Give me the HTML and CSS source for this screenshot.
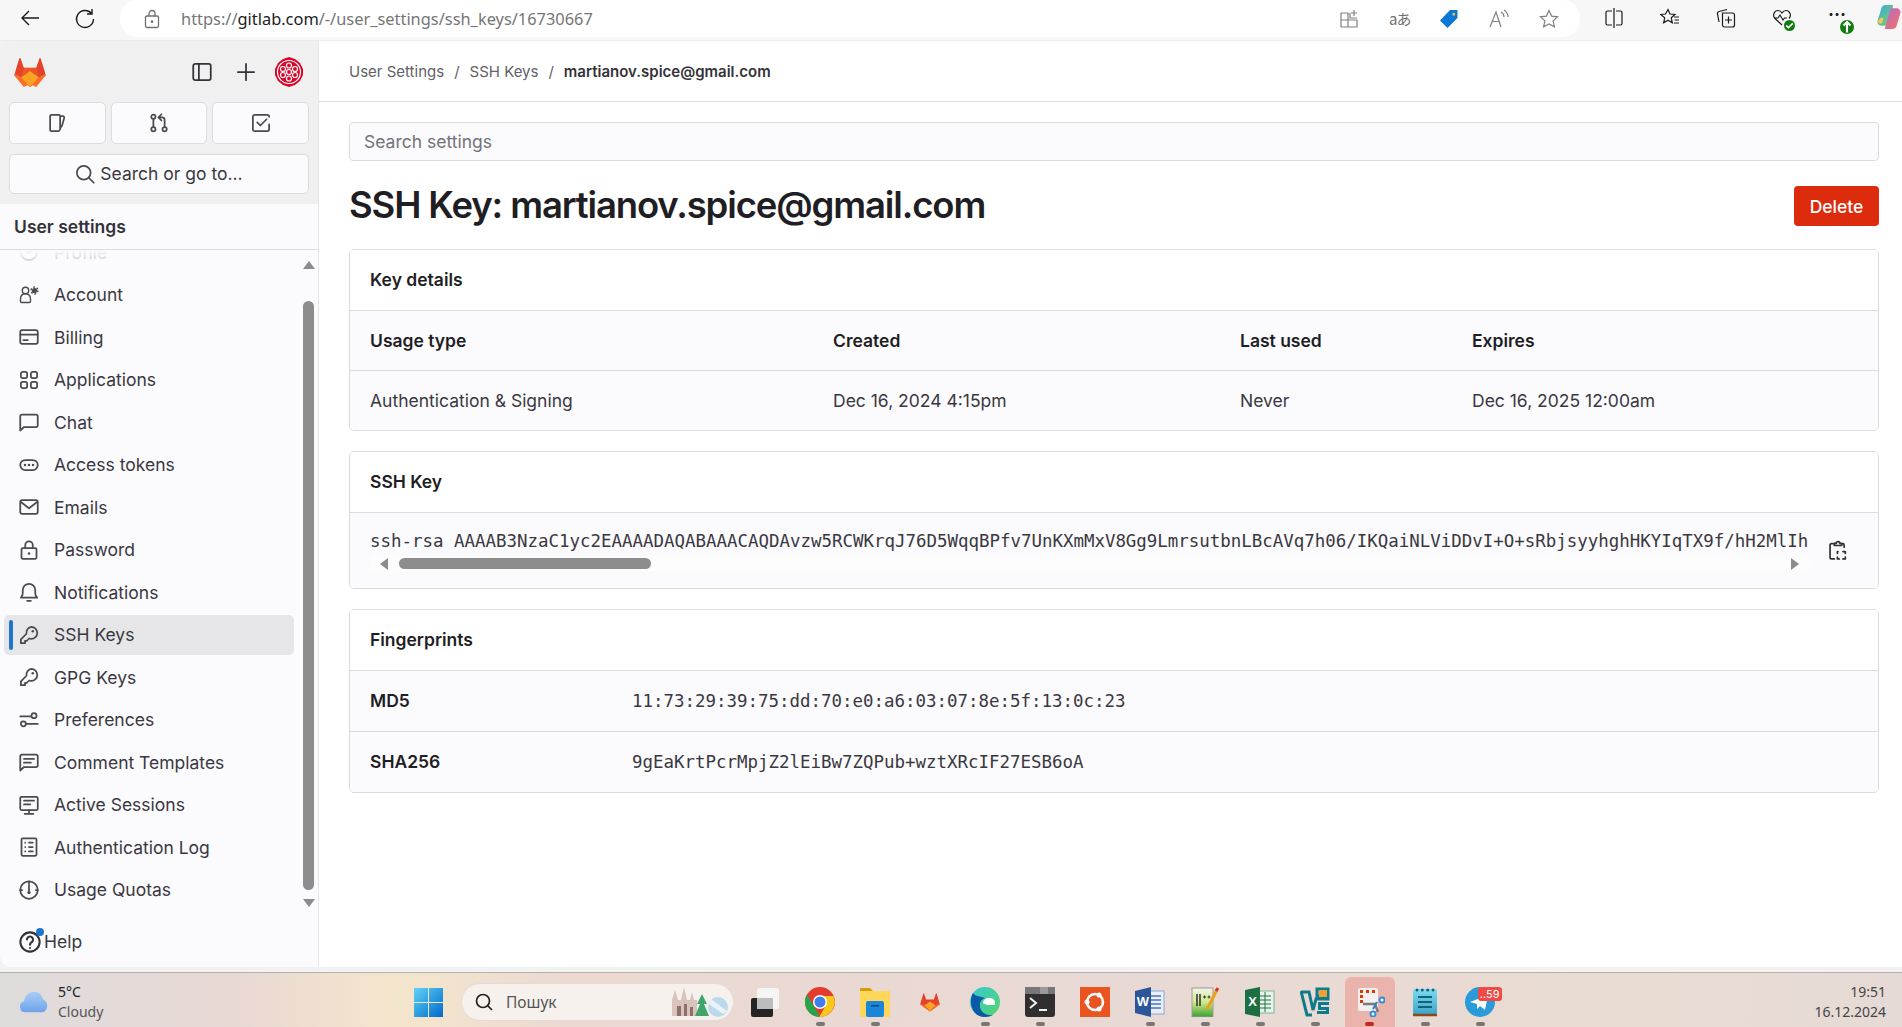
FILE: index.html
```html
<!DOCTYPE html>
<html>
<head>
    <title>SSH Key</title>
    <link rel="stylesheet" href="styles.css">
</head>
<body>

<header class="browser-bar">
    <svg class="browser-icon back-btn" viewBox="0 0 24 24"><path d="M21 12H4M11 5l-7 7 7 7"/></svg>
    <svg class="browser-icon reload-btn" viewBox="0 0 24 24"><path d="M18.5 7.5A8.5 8.5 0 1 0 20.5 13M19 3v5h-5"/></svg>
    <div class="url-pill">
        <svg class="lock-icon" viewBox="0 0 16 20"><rect x="1.5" y="7" width="13" height="11.5" rx="1.5"/><path d="M5 7V4.5a3 3 0 0 1 6 0V7"/><circle cx="8" cy="12.7" r=".7"/></svg>
        <span class="url-text">https://<b>gitlab.com</b>/-/user_settings/ssh_keys/16730667</span>
        <div class="pill-icons">
            <svg class="pill-icon" viewBox="0 0 20 20"><path d="M2 4h7v14H2zM2 11h16v7H9M11 4v5h7M15 1v6M12 4h6"/></svg>
            <span class="translate-glyph">aあ</span>
            <svg class="pill-icon" viewBox="0 0 20 20"><path class="tag-blue" d="M11 1h7.500v8L8.500 19 1 11.500z"/><rect class="tag-dot" x="13.500" y="4" width="2.500" height="2.500"/></svg>
            <svg class="pill-icon" viewBox="0 0 20 20"><path d="M1 18L7 3l5 15M3.500 12.500h7M12 3c2 1 3 3 3 5M15 1c2.500 1.500 4 4 4 7"/></svg>
            <svg class="pill-icon" viewBox="0 0 20 20"><path d="M10 1.500l2.600 5.600 6 .7-4.500 4.100 1.300 6L10 15l-5.400 2.900 1.300-6L1.400 7.800l6-.7z"/></svg>
        </div>
    </div>
    <div class="browser-tools">
        <svg class="tool-icon" viewBox="0 0 20 20"><path d="M10 0v20M8 3H3.500A1.500 1.500 0 0 0 2 4.500v11A1.500 1.500 0 0 0 3.500 17H8M12 3h4.500A1.500 1.500 0 0 1 18 4.500v11a1.500 1.500 0 0 1-1.500 1.500H12"/></svg>
        <svg class="tool-icon" viewBox="0 0 20 20"><path d="M8 1.500l2 4.500 5 .5-3.700 3.300 1 5-4.300-2.600-4.300 2.600 1-5L.5 6.500l5-.5zM14 9h5M14.500 12h4.500M14 15h5"/></svg>
        <div class="tool-stack">
            <svg class="tool-icon" viewBox="0 0 20 20"><path d="M3 14L1.500 6a2 2 0 0 1 1.500-2.500L11 1.500M6.500 5h10a2 2 0 0 1 2 2v10a2 2 0 0 1-2 2h-8a2 2 0 0 1-2-2zM12.500 8.500v7M9 12h7"/></svg>
        </div>
        <div class="tool-stack">
            <svg class="tool-icon" viewBox="0 0 20 20"><path d="M10 17L3 10.500C0 7 2.500 2.500 6 2.500c2 0 3 1 4 2.500 1-1.500 2-2.500 4-2.500 3.500 0 6 4.500 3 8M2.500 10H6l2-3 3 5 1.500-2H15"/></svg>
            <span class="tool-badge"><svg viewBox="0 0 10 10"><path d="M2 5l2 2 4-4"/></svg></span>
        </div>
        <div class="tool-stack">
            <span class="more-dots">...</span>
            <span class="tool-badge update"><svg viewBox="0 0 10 10"><path d="M5 9V1.500M2.500 4L5 1.500 7.500 4"/></svg></span>
        </div>
        <svg class="copilot" viewBox="0 0 24 24">
            <defs>
                <linearGradient id="copA" x1="0" y1="0" x2="1" y2="1"><stop offset="0" stop-color="#2ea8e8"/><stop offset="1" stop-color="#8bd05a"/></linearGradient>
                <linearGradient id="copB" x1="0" y1="0" x2="1" y2="1"><stop offset="0" stop-color="#b26ad8"/><stop offset="1" stop-color="#f5735a"/></linearGradient>
            </defs>
            <path fill="url(#copA)" d="M9 1h7l-5 17c-.5 1.500-1.500 2-3 2H5c-2.500 0-4-2-3.500-4.500L5 4c.5-2 2-3 4-3z"/>
            <path fill="url(#copB)" d="M15 4h4c2.500 0 4 2 3.500 4.500L19 20c-.5 2-2 3-4 3H8l5-17c.4-1.300 1-2 2-2z"/>
            <path fill="#f7c948" d="M4 13l3-.5L5.500 18H4c-1.500 0-2.500-1-2-2.500z"/>
        </svg>
    </div>
</header>

<div class="app">
    <aside class="sidebar">
        <div class="sidebar-top">
            <div class="top-row">
                <svg class="gl-logo" viewBox="0 0 32 30">
                    <path fill="#e24329" d="M31.500 17.600L29.900 11.800 26.600 1.300c-.2-.5-.9-.5-1.100 0l-3.300 9.500H9.800L6.500 1.300c-.2-.5-.9-.5-1.100 0L2.100 11.800.500 17.600c-.2.600 0 1.300.6 1.700L16 30l14.900-10.700c.6-.4.800-1.100.6-1.700z"/>
                    <path fill="#fc6d26" d="M31.500 17.600l-.1-.4c-2.400.5-4.700 1.500-6.700 3L16 26.900 22.200 30 30.900 19.300c.6-.4.800-1.100.6-1.700z"/>
                    <path fill="#fc6d26" d="M.500 17.600l.1-.4c2.400.5 4.700 1.500 6.700 3l8.700 6.700L9.800 30 1.100 19.300C.500 18.900.300 18.200.500 17.600z"/>
                    <path fill="#fca326" d="M7.300 20.200L16 30l8.700-9.800L16 14z"/>
                    <path fill="#fc6d26" d="M9.800 10.800L7.300 20.200 16 14l8.700 6.200-2.500-9.400z" opacity=".45"/>
                </svg>
                <div class="top-actions">
                    <svg class="gl-icon dark" viewBox="0 0 16 16"><rect x="1" y="1.500" width="14" height="13" rx="1.500"/><path d="M5.500 1.500v13"/></svg>
                    <svg class="gl-icon dark" viewBox="0 0 16 16"><path d="M8 1.500v13M1.500 8h13"/></svg>
                    <svg class="avatar" viewBox="0 0 30 30">
                        <path fill="#d7082c" d="M15 0l6 2 5 4 3 6v6l-3 6-5 4-6 2-6-2-5-4-3-6v-6l3-6 5-4z"/>
                        <g fill="none" stroke="#fff" stroke-width="1.200">
                            <circle cx="15" cy="15" r="2.500"/>
                            <circle cx="15" cy="8.500" r="2.500"/><circle cx="15" cy="21.500" r="2.500"/>
                            <circle cx="9" cy="12" r="2.500"/><circle cx="21" cy="12" r="2.500"/>
                            <circle cx="9" cy="18" r="2.500"/><circle cx="21" cy="18" r="2.500"/>
                            <circle cx="15" cy="15" r="11.500"/>
                        </g>
                    </svg>
                </div>
            </div>
            <div class="top-buttons">
                <div class="square-btn"><svg class="gl-icon" viewBox="0 0 16 16"><path d="M10.500 10.500V2.500a1 1 0 0 0-1-1h-6a1 1 0 0 0-1 1v11a1 1 0 0 0 1 1h5.500c.8 0 1.200-.6 1.500-1.500zM10.500 2.500h2c1 0 1.500.8 1.200 1.700l-1.700 6-1.500 2"/></svg></div>
                <div class="square-btn"><svg class="gl-icon" viewBox="0 0 16 16"><circle cx="3.500" cy="3" r="1.700"/><circle cx="3.500" cy="13" r="1.700"/><circle cx="12.500" cy="13" r="1.700"/><path d="M3.500 4.700v6.600M12.500 11.300V5.500a2 2 0 0 0-2-2H8M10 1L7.500 3.500 10 6"/></svg></div>
                <div class="square-btn"><svg class="gl-icon" viewBox="0 0 16 16"><path d="M14.500 9v4a1.500 1.500 0 0 1-1.500 1.500H3A1.500 1.500 0 0 1 1.500 13V3A1.500 1.500 0 0 1 3 1.500h10A1.500 1.500 0 0 1 14.500 3M5 7.500l2.500 2.500 5-5"/></svg></div>
            </div>
            <div class="nav-search">
                <svg class="gl-icon" viewBox="0 0 16 16"><circle cx="7" cy="7" r="5.500"/><path d="M11 11l4 4"/></svg>
                <span>Search or go to...</span>
            </div>
        </div>

        <div class="sidebar-title">User settings</div>

        <div class="nav-wrap">
            <nav class="nav-list">
                <a class="nav-item faded"><svg class="gl-icon" viewBox="0 0 16 16"><circle cx="8" cy="8" r="6.500"/><circle cx="8" cy="6" r="2.500"/></svg>Profile</a>
                <a class="nav-item"><svg class="gl-icon" viewBox="0 0 20 20"><circle cx="6.500" cy="5.500" r="3.200"/><path d="M6.500 8.700c-3.500 0-5 2.500-5 5.300v2.500a1 1 0 0 0 1 1h8a1 1 0 0 0 1-1V14c0-2.800-1.500-5.300-5-5.300z"/><circle class="solid" cx="15.500" cy="5.500" r="2.600"/><circle class="gear" cx="15.500" cy="5.500" r="3.400"/></svg>Account</a>
                <a class="nav-item"><svg class="gl-icon" viewBox="0 0 16 16"><rect x="1" y="2.500" width="14" height="11" rx="1.500"/><path d="M1 6h14M3.500 10.500h3.500"/></svg>Billing</a>
                <a class="nav-item"><svg class="gl-icon" viewBox="0 0 16 16"><rect x="1.500" y="1.500" width="5" height="5" rx="1.500"/><rect x="9.500" y="1.500" width="5" height="5" rx="1.500"/><rect x="1.500" y="9.500" width="5" height="5" rx="1.500"/><rect x="9.500" y="9.500" width="5" height="5" rx="1.500"/></svg>Applications</a>
                <a class="nav-item"><svg class="gl-icon" viewBox="0 0 16 16"><path d="M1 14.800V3.500A1.500 1.500 0 0 1 2.500 2h11A1.500 1.500 0 0 1 15 3.500v7a1.500 1.500 0 0 1-1.500 1.500H4z"/></svg>Chat</a>
                <a class="nav-item"><svg class="gl-icon" viewBox="0 0 16 16"><rect x="1" y="4" width="14" height="8" rx="4"/><path class="dots" d="M4.800 8h.01M8 8h.01M11.200 8h.01"/></svg>Access tokens</a>
                <a class="nav-item"><svg class="gl-icon" viewBox="0 0 16 16"><rect x="1" y="2.500" width="14" height="11" rx="1.500"/><path d="M1.500 4L8 9l6.500-5"/></svg>Emails</a>
                <a class="nav-item"><svg class="gl-icon" viewBox="0 0 16 16"><rect x="2" y="6.500" width="12" height="8.500" rx="1"/><path d="M5 6.500V4a3 3 0 0 1 6 0v2.500"/><path class="dots" d="M8 10.700h.01"/></svg>Password</a>
                <a class="nav-item"><svg class="gl-icon" viewBox="0 0 16 16"><path d="M1.500 12.500h13c-1-1-1.500-2-1.500-3.500V6.500a5 5 0 0 0-10 0V9c0 1.500-.5 2.500-1.500 3.500zM6.500 15h3"/></svg>Notifications</a>
                <a class="nav-item active"><svg class="gl-icon" viewBox="0 0 16 16"><path d="M9.800 1.500a4.800 4.800 0 0 1 0 9.600c-.6 0-1.200-.1-1.700-.3L6.300 12.600H4.800v1.900H1.500v-3l4.500-4.500a4.800 4.800 0 0 1 3.800-5.500z"/><path class="dots" d="M11 5h.01"/></svg>SSH Keys</a>
                <a class="nav-item"><svg class="gl-icon" viewBox="0 0 16 16"><path d="M9.800 1.500a4.800 4.800 0 0 1 0 9.600c-.6 0-1.200-.1-1.700-.3L6.300 12.600H4.800v1.900H1.500v-3l4.500-4.500a4.800 4.800 0 0 1 3.800-5.500z"/><path class="dots" d="M11 5h.01"/></svg>GPG Keys</a>
                <a class="nav-item"><svg class="gl-icon" viewBox="0 0 16 16"><circle cx="12" cy="4.500" r="2"/><circle cx="3.500" cy="11" r="2"/><path d="M1 5h8.500M5.500 11H15"/></svg>Preferences</a>
                <a class="nav-item"><svg class="gl-icon" viewBox="0 0 16 16"><path d="M1 14.800V3.500A1.500 1.500 0 0 1 2.500 2h11A1.500 1.500 0 0 1 15 3.500v7a1.500 1.500 0 0 1-1.500 1.500H4zM4 5.500h8M4 8.500h5.500"/></svg>Comment Templates</a>
                <a class="nav-item"><svg class="gl-icon" viewBox="0 0 16 16"><rect x="1" y="1.500" width="14" height="10.500" rx="1"/><path d="M4 4.500h8M4 7.500h5M8 12v3M4.500 15h7"/></svg>Active Sessions</a>
                <a class="nav-item"><svg class="gl-icon" viewBox="0 0 16 16"><rect x="2" y="1" width="12" height="14" rx="1"/><path d="M5 4.500h.01M5 8h.01M5 11.500h.01M8 4.500h3M8 8h3M8 11.500h3"/></svg>Authentication Log</a>
                <a class="nav-item"><svg class="gl-icon" viewBox="0 0 16 16"><circle cx="8" cy="8" r="7"/><path d="M8 1v2M2.500 8H1M15 8h-1.500M8 4v5"/><circle class="solid" cx="8" cy="10" r="1.300"/></svg>Usage Quotas</a>
            </nav>
            <div class="nav-fade"></div>
            <div class="side-scroll">
                <span class="arrow up"></span>
                <span class="side-track"><span class="side-thumb"></span></span>
                <span class="arrow down"></span>
            </div>
        </div>

        <div class="help-row">
            <span class="help-icon">
                <svg class="gl-icon" viewBox="0 0 16 16"><circle cx="8" cy="8" r="7"/><path d="M5.800 6.200a2.200 2.200 0 1 1 3.400 1.900c-.8.500-1.200 1-1.200 1.900M8 12.300h.01"/></svg>
                <span class="help-dot"></span>
            </span>
            <span>Help</span>
        </div>
    </aside>

    <main class="content">
        <div class="breadcrumbs">
            <span>User Settings</span><span class="crumb-sep">/</span><span>SSH Keys</span><span class="crumb-sep">/</span><span class="crumb-current">martianov.spice@gmail.com</span>
        </div>
        <div class="page">
            <div class="settings-search">Search settings</div>

            <div class="title-row">
                <h1>SSH Key: martianov.spice@gmail.com</h1>
                <button class="delete-btn">Delete</button>
            </div>

            <section class="card">
                <div class="card-head">Key details</div>
                <div class="row details-grid bold"><span>Usage type</span><span>Created</span><span>Last used</span><span>Expires</span></div>
                <div class="row details-grid"><span>Authentication &amp; Signing</span><span>Dec 16, 2024 4:15pm</span><span>Never</span><span>Dec 16, 2025 12:00am</span></div>
            </section>

            <section class="card">
                <div class="card-head">SSH Key</div>
                <div class="key-body">
                    <div class="key-scroll">
                        <div class="key-text">ssh-rsa AAAAB3NzaC1yc2EAAAADAQABAAACAQDAvzw5RCWKrqJ76D5WqqBPfv7UnKXmMxV8Gg9LmrsutbnLBcAVq7h06/IKQaiNLViDDvI+O+sRbjsyyhghHKYIqTX9f/hH2MlIh</div>
                        <div class="key-bar">
                            <span class="arrow left"></span>
                            <span class="key-track"><span class="key-thumb"></span></span>
                            <span class="arrow right"></span>
                        </div>
                    </div>
                    <svg class="gl-icon copy-icon" viewBox="0 0 16 18"><path d="M4 3H2.500A1 1 0 0 0 1.500 4v10.500a1 1 0 0 0 1 1H5M11 3h1a1 1 0 0 1 1 1v2M5 4.500V2.800h1.500a1.500 1.500 0 0 1 3 0H11v1.700zM8 9.500h-.5V11M12 9.500h2v1.500M7.500 14v1.500H9M14 14v1.500h-2"/></svg>
                </div>
            </section>

            <section class="card">
                <div class="card-head">Fingerprints</div>
                <div class="row print-grid"><b>MD5</b><code>11:73:29:39:75:dd:70:e0:a6:03:07:8e:5f:13:0c:23</code></div>
                <div class="row print-grid"><b>SHA256</b><code>9gEaKrtPcrMpjZ2lEiBw7ZQPub+wztXRcIF27ESB6oA</code></div>
            </section>
        </div>
    </main>
</div>

<footer class="taskbar">
    <div class="weather">
        <svg class="cloud" viewBox="0 0 32 24">
            <defs><linearGradient id="cloudG" x1="0" y1="0" x2="0" y2="1"><stop offset="0" stop-color="#a8cdf6"/><stop offset="1" stop-color="#6ea3ea"/></linearGradient></defs>
            <path fill="url(#cloudG)" d="M7 23a6 6 0 0 1-1.500-11.800C6 6 10 1 16 1c5 0 8.500 3.500 9.500 8A7.500 7.500 0 0 1 25 23z"/>
        </svg>
        <div class="weather-text"><span class="temp">5°C</span><span>Cloudy</span></div>
    </div>
    <svg class="win-logo" viewBox="0 0 29 29">
        <defs><linearGradient id="winG" x1="0" y1="0" x2="1" y2="1"><stop offset="0" stop-color="#5fd3f8"/><stop offset="1" stop-color="#0069c8"/></linearGradient></defs>
        <path fill="url(#winG)" d="M0 0h14v14H0zM15 0h14v14H15zM0 15h14v14H0zM15 15h14v14H15z"/>
    </svg>
    <div class="task-search">
        <svg class="q-icon" viewBox="0 0 20 20"><circle cx="9" cy="9" r="6.500"/><path d="M13.500 13.500L18 18"/></svg>
        <span>Пошук</span>
        <svg class="castle" viewBox="0 0 60 32">
            <path fill="#d8c4bc" d="M2 30V14l3-10 3 10h3l3-13 3 13h3l2-8 2 8h3v16z"/>
            <path fill="#8f6f6a" d="M7 30V20h4v10zM14 30V18h3v12zM20 30V21h3v9z"/>
            <path fill="#3fa56b" d="M32 8l5 10h-3l5 12H25l5-12h-3z"/>
            <circle cx="48" cy="21" r="10" fill="#bcd8ec"/>
            <path fill="#e9f3f9" d="M41 13l16 12-4 3-14-10z"/>
        </svg>
    </div>
    <div class="task-apps">
        <div class="app-slot"><svg class="app-icon stack-app" viewBox="0 0 30 30"><rect x="7" y="1" width="22" height="21" rx="2" fill="#f5f5f5"/><rect x="1" y="11" width="22" height="19" rx="2" fill="#242424"/><rect x="7" y="11" width="16" height="11" fill="#bdbdbd"/></svg></div>
        <div class="app-slot on"><svg class="app-icon" viewBox="0 0 30 30"><circle cx="15" cy="15" r="15" fill="#e33b2e"/><path fill="#f9c81a" d="M15 9h13.500A15 15 0 0 1 14 30l6-10z"/><path fill="#2aa44b" d="M2 7.500L9.500 20 15 30A15 15 0 0 1 2 7.500z"/><circle cx="15" cy="15" r="7" fill="#fff"/><circle cx="15" cy="15" r="5.500" fill="#3f7fea"/></svg></div>
        <div class="app-slot on"><svg class="app-icon" viewBox="0 0 30 30"><path fill="#d99b0a" d="M0 2a1 1 0 0 1 1-1h9l3 3h-13z"/><path fill="#fcd75a" d="M0 4h30v26H0z"/><rect x="6" y="14" width="18" height="16" rx="2" fill="#1b86d8"/><rect x="11" y="18" width="8" height="1.500" fill="#0b4c86"/></svg></div>
        <div class="app-slot"><svg class="app-icon small-gl" viewBox="0 0 32 30"><path fill="#e24329" d="M31.500 17.600L26.600 1.300c-.2-.5-.9-.5-1.100 0l-3.300 9.500H9.800L6.500 1.300c-.2-.5-.9-.5-1.100 0L.5 17.600c-.2.600 0 1.300.6 1.700L16 30l14.900-10.700c.6-.4.800-1.100.6-1.700z"/><path fill="#fca326" d="M7.300 20.200L16 30l8.700-9.800L16 14z"/><path fill="#fc6d26" d="M.5 17.600L7.300 20.200 16 30 1.100 19.300zM31.500 17.600L24.700 20.200 16 30l14.900-10.700z"/></svg></div>
        <div class="app-slot on"><svg class="app-icon" viewBox="0 0 30 30"><defs><linearGradient id="edgeG" x1="0" y1="0" x2="1" y2="1"><stop offset="0" stop-color="#38c8d8"/><stop offset="1" stop-color="#52d66a"/></linearGradient></defs><circle cx="15" cy="15" r="15" fill="url(#edgeG)"/><path fill="#0b5aa8" d="M3 6C-2 15 2 30 15 30c3 0 6-1 8-2-8 1-14-4-13-11 .4-3 2-5 5-6-5-2-9-1-12-5z"/><path fill="#fff" d="M13 16c0-3 3-5 6-5 4 0 6 2 6 5 0 1 0 2-1 2h-6c-3-1-4-1-5-2z"/></svg></div>
        <div class="app-slot on"><svg class="app-icon" viewBox="0 0 30 30"><rect y="0" width="30" height="30" rx="3" fill="#2f2f2f"/><rect x="0" y="0" width="30" height="7" fill="#777"/><rect x="15" y="0" width="8" height="7" fill="#9a9a9a"/><path d="M5 11l6 5-6 5" fill="none" stroke="#f2f2f2" stroke-width="2"/><path d="M14 23h8" stroke="#f2f2f2" stroke-width="2"/></svg></div>
        <div class="app-slot"><svg class="app-icon" viewBox="0 0 30 30"><rect width="30" height="30" fill="#e95420"/><circle cx="15" cy="15" r="8" fill="none" stroke="#fff" stroke-width="2.500"/><circle cx="7" cy="15" r="2.500" fill="#fff"/><circle cx="19" cy="8" r="2.500" fill="#fff"/><circle cx="19" cy="22" r="2.500" fill="#fff"/></svg></div>
        <div class="app-slot on"><svg class="app-icon" viewBox="0 0 30 30"><rect x="12" y="4" width="17" height="23" fill="#e9f0fa" stroke="#8aa6d6"/><path d="M16 9h10M16 13h10M16 17h10M16 21h10" stroke="#4a74bd" stroke-width="1.500"/><path fill="#2b579a" d="M0 4l16-4v30L0 26z"/><text class="word-w" x="8" y="19">W</text></svg></div>
        <div class="app-slot on"><svg class="app-icon" viewBox="0 0 30 30"><defs><linearGradient id="nppG" x1="0" y1="0" x2="0" y2="1"><stop offset="0" stop-color="#f4f4e8"/><stop offset=".5" stop-color="#cde88a"/><stop offset="1" stop-color="#3da02c"/></linearGradient></defs><rect x="2" y="1" width="21" height="29" fill="url(#nppG)" stroke="#9a9a9a"/><path d="M7 7v12M10 7v12" stroke="#333" stroke-width="1.500"/><path d="M13 10h3M14.500 8.500v3M17.500 10h3M19 8.500v3" stroke="#333"/><path d="M17 22L27 3" stroke="#e8a21a" stroke-width="3"/><path d="M26 4l2-3" stroke="#d9342a" stroke-width="3"/></svg></div>
        <div class="app-slot on"><svg class="app-icon" viewBox="0 0 30 30"><rect x="12" y="4" width="17" height="22" fill="#e8f3ec" stroke="#7fb796"/><path d="M15 9h11M15 13h11M15 17h11M15 21h11M20 5v20" stroke="#217346"/><path fill="#1d6f42" d="M0 3l15-3v30L0 27z"/><text class="excel-x" x="7.500" y="19">X</text></svg></div>
        <div class="app-slot on"><svg class="app-icon" viewBox="0 0 30 30"><path d="M1 5h8l4 18 3-11h12v-3H17V2h11v8" fill="none" stroke="#0f7a8c" stroke-width="3"/><path d="M19 3h8v7h-8z" fill="#f0a030"/><path d="M18 15h11v3H21v2h8v7H17v-3h9v-1h-8z" fill="#0f7a8c"/><path d="M1 4l6 24h5" fill="none" stroke="#0f7a8c" stroke-width="3"/></svg></div>
        <div class="app-slot active"><svg class="app-icon" viewBox="0 0 30 30"><rect x="3" y="1" width="20" height="23" rx="2" fill="#f2f0ee"/><path d="M5 3h3v3H5zM11 3h3v3h-3zM5 8h3v3H5zM5 13h3v3H5zM17 3h3v3h-3z" fill="#d83b01"/><path d="M8 17h12l3 8" fill="none" stroke="#7a7a7a" stroke-width="2.500"/><path d="M22 15l-4 7" stroke="#2f7fc0" stroke-width="2"/><circle cx="27" cy="13" r="2.500" fill="#fff" stroke="#2f8fd8" stroke-width="2"/><circle cx="18" cy="27" r="2.500" fill="#fff" stroke="#2f8fd8" stroke-width="2"/></svg></div>
        <div class="app-slot on"><svg class="app-icon" viewBox="0 0 30 30"><defs><linearGradient id="noteG" x1="0" y1="0" x2="0" y2="1"><stop offset="0" stop-color="#7fdaf0"/><stop offset="1" stop-color="#3aa5c8"/></linearGradient></defs><rect x="3" y="2" width="24" height="26" rx="2" fill="url(#noteG)"/><path d="M3 28h24" stroke="#8a4a1a" stroke-width="2.500"/><path d="M8 10h14M8 15h14M8 20h14" stroke="#14617e" stroke-width="2"/><path class="dots-note" d="M7 3h.01M12.300 3h.01M17.700 3h.01M23 3h.01"/></svg></div>
        <div class="app-slot on">
            <svg class="app-icon" viewBox="0 0 30 30"><circle cx="15" cy="15" r="15" fill="#2a9ad8"/><path fill="#fff" d="M5 15l18-7-3 15-5-4-3 3v-5z"/></svg>
            <span class="tg-badge">..59</span>
        </div>
    </div>
    <div class="clock"><span>19:51</span><span>16.12.2024</span></div>
</footer>

</body>
</html>
```

FILE: styles.css
```css
* {
    box-sizing: border-box;
}
html, body {
    height: 100%;
}
body {
    margin: 0;
    display: flex;
    flex-direction: column;
    height: 1027px;
    overflow: hidden;
    background: #f2f2f2;
    font-family: Inter, "Noto Sans", sans-serif;
    font-size: 17.5px;
    color: #3a383f;
}

/* browser toolbar */
.browser-bar {
    height: 41px;
    flex: none;
    display: flex;
    align-items: flex-start;
    background: #f7f7f7;
    border-bottom: 1px solid #ececec;
    padding-left: 18px;
}
.browser-icon {
    width: 24px;
    height: 24px;
    margin-top: 6px;
    fill: none;
    stroke: #1d1d1d;
    stroke-width: 1.4;
}
.reload-btn {
    margin-left: 31px;
}
.url-pill {
    width: 1460px;
    height: 37px;
    margin-left: 23px;
    background: #fff;
    border-radius: 0 18px 18px 18px;
    border-top-left-radius: 18px;
    display: flex;
    align-items: center;
    padding-left: 24px;
}
.lock-icon {
    width: 16px;
    height: 20px;
    fill: none;
    stroke: #6f6f6f;
    stroke-width: 1.3;
}
.url-text {
    margin-left: 21px;
    font-family: "Noto Sans", sans-serif;
    font-size: 16.4px;
    color: #767676;
}
.url-text b {
    font-weight: 400;
    color: #1c1c1c;
}
.pill-icons {
    margin-left: auto;
    display: flex;
    align-items: center;
    gap: 30px;
    padding-right: 21px;
}
.pill-icon {
    width: 20px;
    height: 20px;
    fill: none;
    stroke: #808080;
    stroke-width: 1.2;
}
.pill-icon .tag-blue {
    fill: #0a78d6;
    stroke: none;
}
.pill-icon .tag-dot {
    fill: #f8c12d;
    stroke: none;
}
.translate-glyph {
    width: 20px;
    font-family: "Noto Sans CJK JP", sans-serif;
    font-size: 15px;
    color: #707070;
    white-space: nowrap;
    letter-spacing: -1px;
}
.browser-tools {
    display: flex;
    align-items: center;
    gap: 36px;
    height: 36px;
    padding-left: 24px;
}
.tool-icon {
    width: 20px;
    height: 20px;
    fill: none;
    stroke: #1a1a1a;
    stroke-width: 1.2;
    display: block;
}
.tool-stack {
    position: relative;
    width: 20px;
    height: 20px;
}
.tool-badge {
    position: absolute;
    right: -3px;
    bottom: -3px;
    width: 11px;
    height: 11px;
    border-radius: 50%;
    background: #107c10;
}
.tool-badge svg {
    display: block;
    fill: none;
    stroke: #fff;
    stroke-width: 1.5;
}
.tool-badge.update {
    width: 14px;
    height: 14px;
    right: -6px;
    bottom: -6px;
}
.more-dots {
    position: absolute;
    left: 0;
    top: -9px;
    font-size: 18px;
    font-weight: 700;
    color: #1a1a1a;
}
.copilot {
    width: 26px;
    height: 26px;
    margin-left: -8px;
    margin-top: -2px;
}

/* app shell */
.app {
    flex: 1;
    display: flex;
    min-height: 0;
    margin-bottom: 5px;
}
.sidebar {
    width: 319px;
    flex: none;
    display: flex;
    flex-direction: column;
    background: #fbfafd;
    border-right: 1px solid #e6e6e8;
    border-radius: 12px 0 0 12px;
    overflow: hidden;
}
.sidebar-top {
    height: 163px;
    flex: none;
    background: #f0f0f0;
    padding: 16px 9px 0;
}
.top-row {
    display: flex;
    align-items: center;
    justify-content: space-between;
    height: 30px;
    padding: 0 5px;
}
.gl-logo {
    width: 32px;
    height: 30px;
}
.top-actions {
    display: flex;
    align-items: center;
    gap: 24px;
}
.top-actions .avatar {
    width: 30px;
    height: 30px;
    margin-left: -6px;
}
.gl-icon {
    width: 20px;
    height: 20px;
    flex: none;
    fill: none;
    stroke: #4b4a50;
    stroke-width: 1.4;
    stroke-linecap: round;
    stroke-linejoin: round;
}
.gl-icon.dark {
    stroke: #333238;
}
.gl-icon .solid {
    fill: #4b4a50;
    stroke: none;
}
.gl-icon .gear {
    stroke-width: 1.5;
    stroke-dasharray: 1.8 1.76;
    stroke-linecap: butt;
}
.gl-icon .dots {
    stroke-width: 2;
}
.top-buttons {
    display: flex;
    gap: 5px;
    margin-top: 15px;
}
.square-btn {
    flex: 1;
    height: 42px;
    background: #fbfafd;
    border: 1px solid #dcdcde;
    border-radius: 5px;
    display: flex;
    align-items: center;
    justify-content: center;
}
.nav-search {
    height: 40px;
    margin-top: 10px;
    padding-bottom: 1px;
    background: #fbfafd;
    border: 1px solid #dcdcde;
    border-radius: 5px;
    display: flex;
    align-items: center;
    justify-content: center;
    gap: 5px;
}
.sidebar-title {
    height: 46px;
    flex: none;
    display: flex;
    align-items: center;
    padding-left: 14px;
    font-weight: 600;
    color: #333238;
    border-bottom: 1px solid #dcdcde;
}
.nav-wrap {
    position: relative;
    height: 673px;
    flex: none;
    overflow: hidden;
}
.nav-list {
    margin-top: -18px;
    padding: 0 24px 0 4px;
    display: flex;
    flex-direction: column;
    gap: 2.5px;
}
.nav-item {
    position: relative;
    height: 40px;
    flex: none;
    display: flex;
    align-items: center;
    gap: 15px;
    padding-left: 15px;
    border-radius: 5px;
}
.nav-item.faded {
    opacity: .3;
}
.nav-item.active {
    background: #e6e6e8;
}
.nav-item.active::before {
    content: "";
    position: absolute;
    left: 5px;
    top: 5px;
    bottom: 5px;
    width: 4px;
    border-radius: 2px;
    background: #1f75cb;
}
.nav-fade {
    position: absolute;
    top: 0;
    left: 0;
    right: 0;
    height: 14px;
    background: linear-gradient(#fbfafd, rgba(251, 250, 253, 0));
}
.side-scroll {
    position: absolute;
    right: 4px;
    top: 11px;
    width: 11px;
    display: flex;
    flex-direction: column;
    align-items: center;
}
.side-track {
    height: 589px;
    margin: 32px 0 9px;
}
.side-thumb {
    display: block;
    width: 11px;
    height: 589px;
    border-radius: 6px;
    background: #8c8c8c;
}
.arrow {
    display: block;
    width: 0;
    height: 0;
    flex: none;
    border-style: solid;
    border-color: transparent;
}
.arrow.up {
    border-width: 0 6px 8px;
    border-bottom-color: #8c8c8c;
}
.arrow.down {
    border-width: 8px 6px 0;
    border-top-color: #8c8c8c;
}
.arrow.left {
    border-width: 6px 8px 6px 0;
    border-right-color: #8c8c8c;
}
.arrow.right {
    border-width: 6px 0 6px 8px;
    border-left-color: #8c8c8c;
}
.help-row {
    display: flex;
    align-items: center;
    gap: 3px;
    padding: 0 0 3px 19px;
    height: 40px;
}
.help-icon {
    position: relative;
    display: flex;
}
.help-icon .gl-icon {
    stroke: #333238;
    stroke-width: 1.5;
    width: 22px;
    height: 22px;
}
.help-dot {
    position: absolute;
    right: -3px;
    top: -3px;
    width: 8px;
    height: 8px;
    border-radius: 50%;
    background: #1f75cb;
}

/* main content */
.content {
    flex: 1;
    min-width: 0;
    background: #fff;
}
.breadcrumbs {
    height: 61px;
    display: flex;
    align-items: center;
    padding: 1px 0 0 30px;
    border-bottom: 1px solid #dcdcde;
    font-size: 15px;
    color: #626168;
}
.crumb-sep {
    margin: 0 10px;
}
.crumb-current {
    font-weight: 600;
    color: #333238;
}
.page {
    padding: 20px 23px 0 30px;
}
.settings-search {
    height: 39px;
    display: flex;
    align-items: center;
    padding-left: 14px;
    background: #fbfafd;
    border: 1px solid #dcdcde;
    border-radius: 4px;
    color: #737278;
}
.title-row {
    display: flex;
    align-items: center;
    justify-content: space-between;
    height: 88px;
}
h1 {
    margin: 0;
    font-size: 36.5px;
    font-weight: 600;
    letter-spacing: -1.13px;
    color: #1f1e24;
}
.delete-btn {
    width: 85px;
    height: 40px;
    margin-top: 2px;
    border: 0;
    border-radius: 4px;
    background: #dd2b0e;
    color: #fff;
    font: 500 17.5px Inter, sans-serif;
}
.card {
    border: 1px solid #dcdcde;
    border-radius: 5px;
    margin-bottom: 20px;
    overflow: hidden;
}
.card-head {
    height: 60px;
    display: flex;
    align-items: center;
    padding: 0 0 1px 20px;
    background: #fff;
    font-weight: 600;
    color: #1f1e24;
}
.row {
    height: 60px;
    display: grid;
    align-items: center;
    padding-left: 20px;
    background: #fbfafd;
    border-top: 1px solid #dcdcde;
}
.details-grid {
    grid-template-columns: 463px 407px 232px 1fr;
}
.details-grid.bold {
    padding-bottom: 1px;
    font-weight: 600;
    color: #1f1e24;
}
.print-grid {
    height: 61px;
    grid-template-columns: 262px 1fr;
}
.print-grid b {
    padding-bottom: 2px;
    font-weight: 600;
    color: #1f1e24;
}
code, .key-text {
    font-family: "DejaVu Sans Mono", "Liberation Mono", monospace;
    font-size: 17.44px;
    color: #3a383f;
}
.key-body {
    height: 76px;
    display: flex;
    padding: 0 0 0 20px;
    background: #fbfafd;
    border-top: 1px solid #dcdcde;
}
.key-scroll {
    width: 1439px;
    flex: none;
    padding-top: 17px;
}
.key-text {
    white-space: nowrap;
    overflow: hidden;
    line-height: 22px;
}
.key-bar {
    height: 15px;
    margin-top: 4px;
    display: flex;
    align-items: center;
    background: #fdfdfe;
    padding: 0 10px;
}
.key-track {
    flex: 1;
    padding-left: 11px;
}
.key-thumb {
    display: block;
    width: 252px;
    height: 11px;
    border-radius: 6px;
    background: #8c8c8c;
}
.copy-icon {
    margin: 27px 0 0 19px;
    width: 20px;
    height: 22px;
    stroke: #333238;
}

/* windows taskbar */
.taskbar {
    height: 55px;
    flex: none;
    display: flex;
    align-items: center;
    padding-top: 4px;
    border-top: 1px solid #b8b2ae;
    background: linear-gradient(90deg, #dedcdc 0, #e8d8d4 12%, #f4e6cc 21%, #ebd9d2 30%, #e9d9d4 60%, #e9dcd2 85%, #e6dad6 100%);
    color: #444;
}
.weather {
    width: 414px;
    flex: none;
    display: flex;
    align-items: center;
    padding-left: 19px;
    font-family: "Noto Sans", sans-serif;
    font-size: 14px;
}
.cloud {
    width: 30px;
    height: 24px;
}
.weather-text {
    display: flex;
    flex-direction: column;
    margin-left: 9px;
    line-height: 20px;
    color: #555;
}
.temp {
    color: #222;
}
.win-logo {
    width: 29px;
    height: 29px;
    flex: none;
}
.task-search {
    width: 273px;
    height: 38px;
    flex: none;
    margin-left: 18px;
    display: flex;
    align-items: center;
    padding-left: 12px;
    background: #f7f1ee;
    border: 1px solid #e4dcd8;
    border-radius: 19px;
    font-family: "Noto Sans", sans-serif;
    font-size: 15.5px;
    color: #555;
}
.q-icon {
    width: 20px;
    height: 20px;
    margin-right: 12px;
    fill: none;
    stroke: #222;
    stroke-width: 1.7;
}
.castle {
    width: 60px;
    height: 32px;
    margin-left: auto;
    margin-right: 3px;
}
.task-apps {
    display: flex;
    height: 54px;
    margin-top: -4px;
    margin-left: 3.500px;
}
.app-slot {
    position: relative;
    width: 55px;
    display: flex;
    align-items: center;
    justify-content: center;
    padding-top: 4px;
}
.app-slot.on::after, .app-slot.active::after {
    content: "";
    position: absolute;
    left: 23px;
    bottom: 1px;
    width: 9px;
    height: 4px;
    border-radius: 2px;
    background: #777;
}
.app-slot.active {
    width: 50px;
    margin: 4px 2.500px 0;
    padding-top: 0;
    border-radius: 6px 6px 0 0;
    background: #eab3ac;
}
.app-slot.active::after {
    left: 20px;
    background: #c42b1c;
}
.app-icon {
    width: 30px;
    height: 30px;
}
.small-gl {
    width: 20px;
    height: 20px;
}
.word-w, .excel-x {
    fill: #fff;
    font: 700 13px "Liberation Sans", sans-serif;
    text-anchor: middle;
}
.dots-note {
    stroke: #14617e;
    stroke-width: 3;
    stroke-linecap: round;
}
.tg-badge {
    position: absolute;
    right: 6px;
    top: 14px;
    padding: 0 2px;
    height: 14px;
    line-height: 14px;
    background: #f04a45;
    border-radius: 3px;
    font-size: 11px;
    color: #fff;
}
.clock {
    margin-left: auto;
    padding-right: 16px;
    display: flex;
    flex-direction: column;
    align-items: flex-end;
    line-height: 20px;
    font-family: "Noto Sans", sans-serif;
    font-size: 14px;
    color: #444;
}
```
